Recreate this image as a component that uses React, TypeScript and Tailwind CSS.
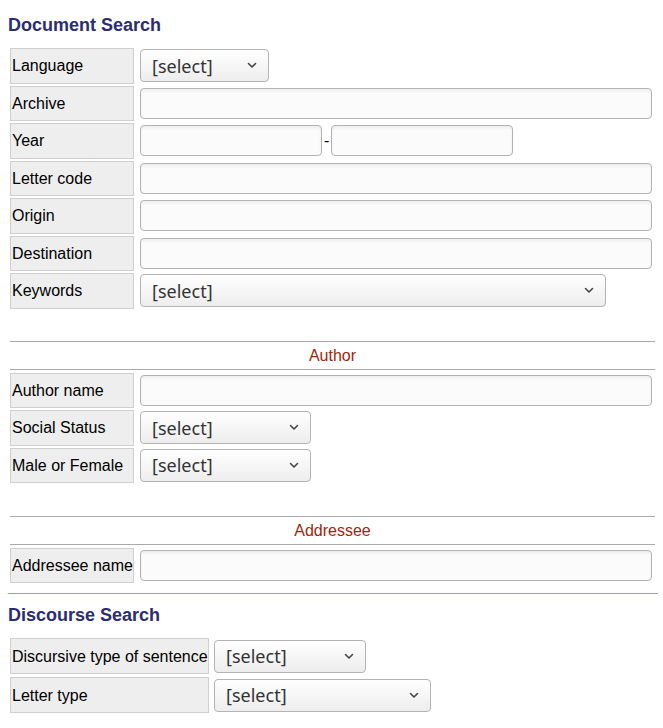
import React from 'react';

function Chevron() {
  return (
    <svg width="10" height="7" viewBox="0 0 10 7" fill="none">
      <path d="M1.5 1.5l3.5 3.5 3.5-3.5" stroke="#444" strokeWidth="1.6" strokeLinecap="round" strokeLinejoin="round" />
    </svg>
  );
}

function Select({ width }: { width: string }) {
  return (
    <div
      className={`${width} h-[33px] shrink-0 flex items-center justify-between pl-[11px] pr-[11px] rounded-[4px] border border-[#b3b3b3] bg-linear-to-b from-white to-[#ededed] font-['Noto_Sans',sans-serif] text-[18px] text-[#333]`}
    >
      <span className="mt-[1px]">[select]</span>
      <Chevron />
    </div>
  );
}

function TextInput({ width = 'w-[512px]' }: { width?: string }) {
  return (
    <input
      type="text"
      className={`${width} h-[31px] shrink-0 rounded-[4px] border border-[#b3b3b3] bg-[#fbfbfb] shadow-[inset_0_2px_3px_rgba(0,0,0,0.06)] outline-none`}
    />
  );
}

function Row({ label, labelWidth = 'w-[124px]', gap = 'gap-[6px]', tall = false, children }: {
  label: string;
  labelWidth?: string;
  gap?: string;
  tall?: boolean;
  children: React.ReactNode;
}) {
  return (
    <div className={`flex items-center ${gap} ${tall ? 'h-[36px]' : 'h-[35.5px]'}`}>
      <div className={`${labelWidth} h-full shrink-0 flex items-center pl-[1px] pt-[1px] bg-[#eeeeee] border border-[#cfcfcf] text-black whitespace-nowrap`}>
        {label}
      </div>
      {children}
    </div>
  );
}

function GroupHeader({ title }: { title: string }) {
  return (
    <div className="w-[645px] h-[29px] border-y border-[#aaaaaa] flex items-center justify-center text-[#a0260a]">
      {title}
    </div>
  );
}

export default function App() {
  return (
    <div className="pl-[8px] w-[658px] bg-white font-['Liberation_Sans',Arial,sans-serif] text-[16px]">
      <h2 className="mt-[13.5px] mb-[12.5px] text-[18px] leading-[22px] font-bold text-[#2b2d70]">Document Search</h2>

      <div className="ml-[2px] flex flex-col gap-[2px]">
        <Row label="Language">
          <Select width="w-[129px]" />
        </Row>
        <Row label="Archive">
          <TextInput />
        </Row>
        <Row label="Year">
          <div className="flex items-center">
            <TextInput width="w-[182px]" />
            <span className="pl-[2px] pr-[2px]">-</span>
            <TextInput width="w-[182px]" />
          </div>
        </Row>
        <Row label="Letter code">
          <TextInput />
        </Row>
        <Row label="Origin">
          <TextInput />
        </Row>
        <Row label="Destination">
          <TextInput />
        </Row>
        <Row label="Keywords">
          <Select width="w-[466px]" />
        </Row>
      </div>

      <div className="ml-[2px] mt-[32.5px] flex flex-col gap-[2px]">
        <div className="mb-[0.5px]">
          <GroupHeader title="Author" />
        </div>
        <Row label="Author name">
          <TextInput />
        </Row>
        <Row label="Social Status">
          <Select width="w-[171px]" />
        </Row>
        <Row label="Male or Female">
          <Select width="w-[171px]" />
        </Row>
      </div>

      <div className="ml-[2px] mt-[33px] flex flex-col gap-[2px]">
        <div className="mb-[0.5px]">
          <GroupHeader title="Addressee" />
        </div>
        <Row label="Addressee name">
          <TextInput />
        </Row>
      </div>

      <div className="mt-[10px] h-px w-[650px] bg-[#f08080]" />

      <h2 className="mt-[9.5px] mb-[12.5px] text-[18px] leading-[22px] font-bold text-[#2b2d70]">Discourse Search</h2>

      <div className="ml-[2px] flex flex-col gap-[3px] pb-[14px]">
        <Row label="Discursive type of sentence" labelWidth="w-[199px]" gap="gap-[5px]" tall>
          <Select width="w-[152px]" />
        </Row>
        <Row label="Letter type" labelWidth="w-[199px]" gap="gap-[5px]" tall>
          <Select width="w-[217px]" />
        </Row>
      </div>
    </div>
  );
}
